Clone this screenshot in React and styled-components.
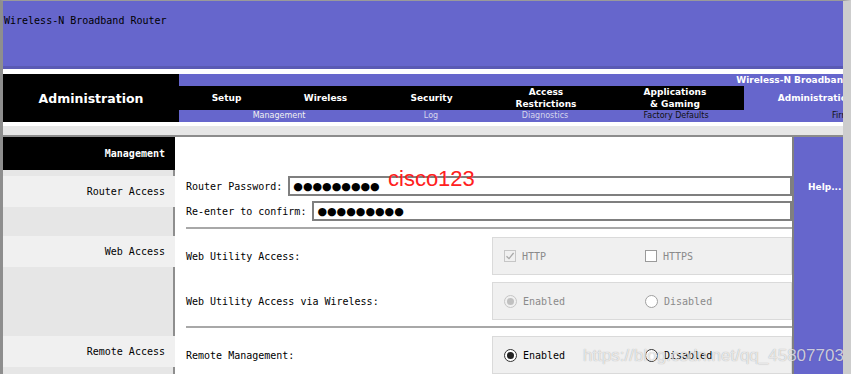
import React from 'react'
import styled, { createGlobalStyle } from 'styled-components'

const Global = createGlobalStyle`
  html, body {
    margin: 0;
    padding: 0;
    background: #ffffff;
  }
`

const PURPLE = '#6666cc'
const MONO = '"DejaVu Sans Mono", "Liberation Mono", monospace'
const SANS = '"DejaVu Sans", Verdana, sans-serif'

const tabs = [
  { w: 95, label: ['Setup'] },
  { w: 103, label: ['Wireless'] },
  { w: 109, label: ['Security'] },
  { w: 120, label: ['Access', 'Restrictions'] },
  { w: 138, label: ['Applications', '& Gaming'] },
  { w: 143, label: ['Administration'], active: true },
]

const subTabs = [
  { w: 200, text: 'Management', tone: '#f2f2f2' },
  { w: 104, text: 'Log', tone: '#d6d6ec' },
  { w: 124, text: 'Diagnostics', tone: '#d6d6ec' },
  { w: 138, text: 'Factory Defaults', tone: '#111111' },
  { w: 143, text: 'Firmware Upgrade', tone: '#111111', pad: 87 },
]

function Check({ checked, disabled }) {
  return (
    <CheckBox disabled={disabled}>
      {checked && (
        <svg width="10" height="10" viewBox="0 0 10 10">
          <path d="M1.5 5.2 L4 7.6 L8.6 2" fill="none" stroke="#a8a8a8" strokeWidth="1.3" />
        </svg>
      )}
    </CheckBox>
  )
}

function Radio({ checked, disabled, dark }) {
  return <RadioDot checked={checked} disabled={disabled} dark={dark} />
}

export default function App() {
  return (
    <>
      <Global />
      <Frame>
        <Page>
          <Header>Wireless-N Broadband Router</Header>

          <Nav>
            <Brand>Administration</Brand>
            <TabArea>
              <TopStrip>Wireless-N Broadband Router</TopStrip>
              <TabsRow>
                {tabs.map((t) => (
                  <Tab key={t.label.join(' ')} w={t.w} active={t.active}>
                    {t.label.map((l) => <span key={l}>{l}</span>)}
                  </Tab>
                ))}
              </TabsRow>
              <SubStrip>
                {subTabs.map((s) => (
                  <SubItem key={s.text} w={s.w} tone={s.tone} pad={s.pad}>{s.text}</SubItem>
                ))}
              </SubStrip>
            </TabArea>
          </Nav>

          <Band />

          <Body>
            <Sidebar>
              <SideHead>Management</SideHead>
              <SideRow h={6} />
              <SideRow h={31} light>Router Access</SideRow>
              <SideRow h={29} />
              <SideRow h={31} light>Web Access</SideRow>
              <SideRow h={69} />
              <SideRow h={31} light>Remote Access</SideRow>
              <SideRow h={40} />
            </Sidebar>

            <Content>
              <FieldRow top={39}>
                <Label>Router Password:</Label>
                <PassBox>●●●●●●●●●</PassBox>
              </FieldRow>
              <FieldRow top={5}>
                <Label>Re-enter to confirm:</Label>
                <PassBox>●●●●●●●●●</PassBox>
              </FieldRow>
              <Rule top={6} />

              <OptionRow top={8}>
                <Label>Web Utility Access:</Label>
                <OptionBox>
                  <Option dim>
                    <Check checked disabled />
                    HTTP
                  </Option>
                  <Option dim>
                    <Check />
                    HTTPS
                  </Option>
                </OptionBox>
              </OptionRow>
              <OptionRow top={7}>
                <Label>Web Utility Access via Wireless:</Label>
                <OptionBox>
                  <Option dim>
                    <Radio checked disabled />
                    Enabled
                  </Option>
                  <Option dim>
                    <Radio />
                    Disabled
                  </Option>
                </OptionBox>
              </OptionRow>
              <Rule top={6} />
              <OptionRow top={8}>
                <Label>Remote Management:</Label>
                <OptionBox>
                  <Option>
                    <Radio checked dark />
                    Enabled
                  </Option>
                  <Option>
                    <Radio dark />
                    Disabled
                  </Option>
                </OptionBox>
              </OptionRow>

              <Note>cisco123</Note>
            </Content>

            <HelpCol>Help...</HelpCol>
          </Body>
        </Page>
        <Watermark>https://blog.csdn.net/qq_45807703</Watermark>
      </Frame>
    </>
  )
}

const Frame = styled.div`
  position: relative;
  width: 851px;
  height: 374px;
  box-sizing: border-box;
  border-top: 1px solid #9a9a9a;
  border-left: 3px solid #8e8e8e;
  border-right: 8px solid #cdcdcd;
  overflow: hidden;
  background: #ffffff;
`

const Page = styled.div`
  width: 885px;
`

const Header = styled.div`
  height: 51px;
  padding: 14px 0 0 1px;
  background: ${PURPLE};
  border-bottom: 3px solid #5a5ab4;
  margin-bottom: 5px;
  font-family: ${MONO};
  font-size: 10px;
  line-height: 12px;
  color: #000;
`

const Nav = styled.div`
  display: flex;
  height: 48px;
`

const Brand = styled.div`
  width: 177px;
  background: #000;
  color: #fff;
  display: flex;
  align-items: center;
  justify-content: center;
  font-family: ${SANS};
  font-weight: bold;
  font-size: 12.5px;
`

const TabArea = styled.div`
  flex: 1;
  display: flex;
  flex-direction: column;
`

const TopStrip = styled.div`
  height: 12px;
  background: ${PURPLE};
  color: #fff;
  text-align: right;
  padding-right: 1px;
  font-family: ${SANS};
  font-weight: bold;
  font-size: 9px;
  line-height: 12px;
  white-space: nowrap;
`

const TabsRow = styled.div`
  height: 24px;
  display: flex;
  background: #000;
`

const Tab = styled.div`
  width: ${(p) => p.w}px;
  display: flex;
  flex-direction: column;
  align-items: center;
  justify-content: center;
  background: ${(p) => (p.active ? PURPLE : '#000')};
  color: #fff;
  font-family: ${SANS};
  font-weight: bold;
  font-size: 9px;
  line-height: 12px;
  white-space: nowrap;
`

const SubStrip = styled.div`
  height: 12px;
  display: flex;
  background: ${PURPLE};
`

const SubItem = styled.div`
  width: ${(p) => p.w}px;
  box-sizing: border-box;
  text-align: ${(p) => (p.pad ? 'left' : 'center')};
  padding-left: ${(p) => p.pad || 0}px;
  color: ${(p) => p.tone};
  font-family: ${SANS};
  font-size: 8px;
  line-height: 12px;
  white-space: nowrap;
`

const Band = styled.div`
  margin-top: 4px;
  height: 9px;
  background: #e6e6e6;
  border-bottom: 2px solid #8c8c8c;
`

const Body = styled.div`
  display: flex;
  height: 240px;
  overflow: hidden;
`

const Sidebar = styled.div`
  width: 172px;
  flex-shrink: 0;
  display: flex;
  flex-direction: column;
`

const SideHead = styled.div`
  height: 33px;
  flex-shrink: 0;
  background: #000;
  color: #fff;
  display: flex;
  align-items: center;
  justify-content: flex-end;
  padding-right: 10px;
  font-family: ${MONO};
  font-weight: bold;
  font-size: 10px;
`

const SideRow = styled.div`
  height: ${(p) => p.h}px;
  flex-shrink: 0;
  background: ${(p) => (p.light ? '#f0f0f0' : '#e6e6e6')};
  box-shadow: ${(p) => (p.light ? 'none' : 'inset -2px 0 0 #8e8e8e')};
  display: flex;
  align-items: center;
  justify-content: flex-end;
  padding-right: 10px;
  font-family: ${MONO};
  font-size: 10px;
  color: #000;
`

const Content = styled.div`
  position: relative;
  width: 617px;
  flex-shrink: 0;
  box-sizing: border-box;
  padding-left: 11px;
  display: flex;
  flex-direction: column;
`

const FieldRow = styled.div`
  display: flex;
  align-items: center;
  gap: 6px;
  height: 20px;
  flex-shrink: 0;
  margin-top: ${(p) => p.top}px;
`

const Label = styled.div`
  font-family: ${MONO};
  font-size: 10px;
  color: #000;
  white-space: nowrap;
`

const PassBox = styled.div`
  flex: 1;
  height: 20px;
  box-sizing: border-box;
  border: 2px solid #7f7f7f;
  padding-left: 3px;
  display: flex;
  align-items: center;
  font-family: ${SANS};
  font-size: 11px;
  letter-spacing: 0;
  color: #000;
`

const Rule = styled.div`
  margin-top: ${(p) => p.top}px;
  height: 2px;
  flex-shrink: 0;
  background: #a8a8a8;
`

const OptionRow = styled.div`
  display: flex;
  align-items: center;
  height: 38px;
  flex-shrink: 0;
  margin-top: ${(p) => p.top}px;
`

const OptionBox = styled.div`
  margin-left: auto;
  width: 300px;
  height: 38px;
  box-sizing: border-box;
  background: #f0f0f0;
  border: 1px solid #dadada;
  display: flex;
  align-items: center;
  padding-left: 11px;
`

const Option = styled.div`
  width: 141px;
  display: flex;
  align-items: center;
  gap: 6px;
  font-family: ${MONO};
  font-size: 10px;
  color: ${(p) => (p.dim ? '#8a8a8a' : '#000')};
`

const CheckBox = styled.span`
  width: 12px;
  height: 12px;
  box-sizing: border-box;
  border: 1px solid ${(p) => (p.disabled ? '#c6c6c6' : '#9a9a9a')};
  background: ${(p) => (p.disabled ? '#f0f0f0' : '#ffffff')};
  display: flex;
  align-items: center;
  justify-content: center;
`

const RadioDot = styled.span`
  width: 13px;
  height: 13px;
  box-sizing: border-box;
  border-radius: 50%;
  border: 1px solid ${(p) => (p.dark ? '#333' : p.disabled ? '#c6c6c6' : '#a0a0a0')};
  background: ${(p) => (p.disabled ? '#f0f0f0' : '#ffffff')};
  display: flex;
  align-items: center;
  justify-content: center;

  &::after {
    content: '';
    display: ${(p) => (p.checked ? 'block' : 'none')};
    width: 7px;
    height: 7px;
    border-radius: 50%;
    background: ${(p) => (p.dark ? '#222' : '#c0c0c0')};
  }
`

const Note = styled.div`
  position: absolute;
  left: 213px;
  top: 31px;
  font-family: "Liberation Sans", Arial, sans-serif;
  font-size: 22px;
  line-height: 22px;
  color: #ff2020;
`

const HelpCol = styled.div`
  flex: 1;
  border-left: 2px solid #808080;
  background: ${PURPLE};
  padding: 44px 0 0 14px;
  color: #fff;
  font-family: ${SANS};
  font-weight: bold;
  font-size: 9px;
  line-height: 12px;
  white-space: nowrap;
`

const Watermark = styled.div`
  position: absolute;
  left: 580px;
  top: 346px;
  font-family: "Liberation Sans", Arial, sans-serif;
  font-size: 17px;
  line-height: 17px;
  color: rgba(255, 255, 255, 0.72);
  text-shadow: 0 0 1px rgba(0, 0, 0, 0.35);
  white-space: nowrap;
`
